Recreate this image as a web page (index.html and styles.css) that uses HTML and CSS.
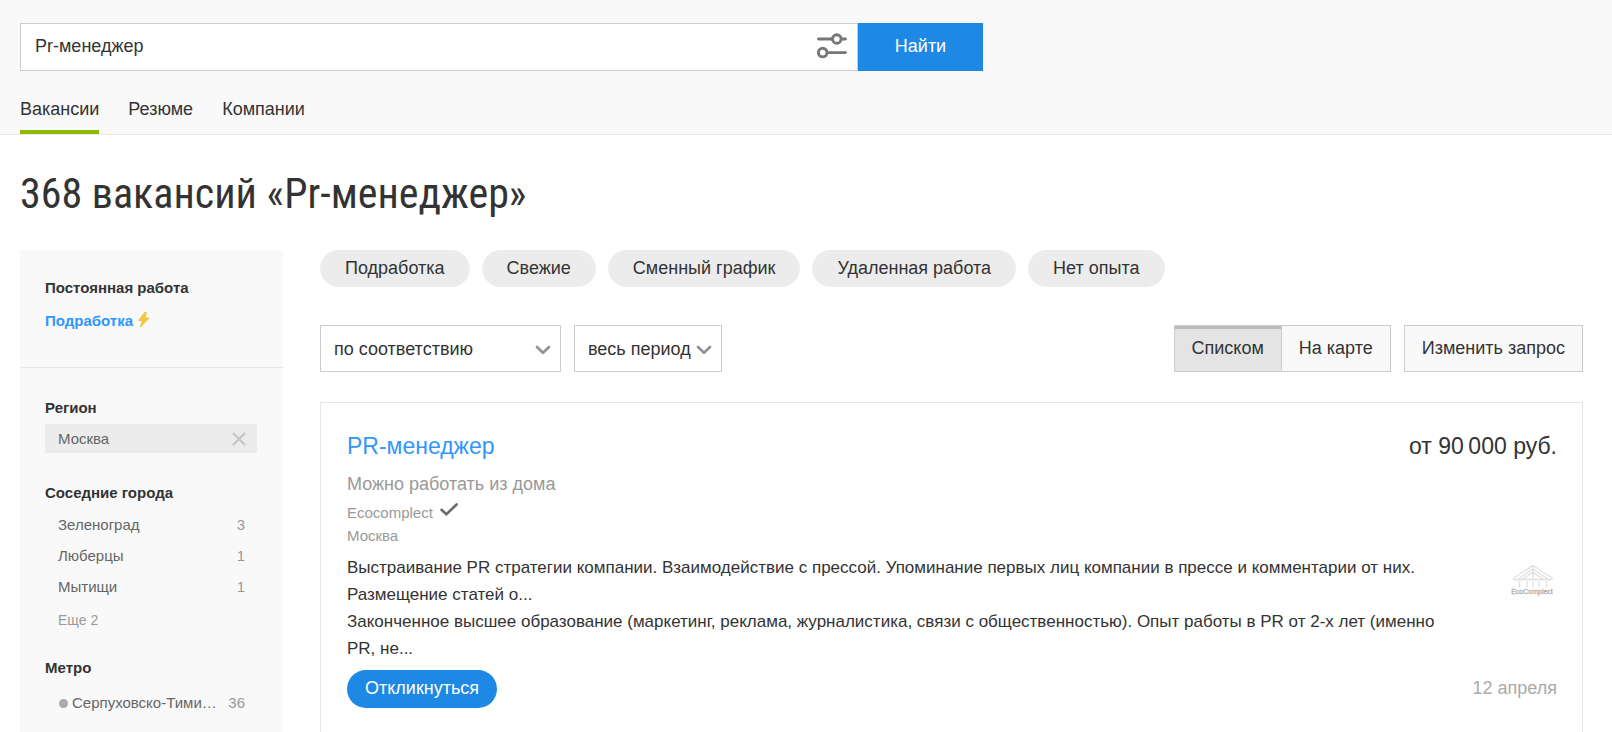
FILE: index.html
```html
<!DOCTYPE html>
<html lang="ru">
<head>
<meta charset="utf-8">
<meta name="viewport" content="width=device-width, initial-scale=1">
<title>368 вакансий «Pr-менеджер»</title>
<link rel="stylesheet" href="styles.css">
</head>
<body>
<header class="header">
  <form class="search" role="search">
    <div class="search-box">
      <input class="search-input" type="text" value="Pr-менеджер" aria-label="Поиск">
      <button class="search-filter" type="button" aria-label="Фильтры">
        <svg width="30" height="26" viewBox="0 0 30 26" fill="none" stroke="#777" stroke-width="2.9" stroke-linecap="round">
          <path d="M1.5 6H15M25 6h3.500M10.500 19.600h18"/>
          <circle cx="19.800" cy="6" r="4.300"/>
          <circle cx="5.700" cy="19.600" r="4.300"/>
        </svg>
      </button>
    </div>
    <button class="search-submit" type="submit">Найти</button>
  </form>
  <nav class="tabs">
    <a class="tab tab-active" href="#">Вакансии</a>
    <a class="tab" href="#">Резюме</a>
    <a class="tab" href="#">Компании</a>
  </nav>
</header>
<main class="page">
  <h1 class="title">368 вакансий «Pr-менеджер»</h1>
  <div class="columns">
    <aside class="sidebar">
      <section class="worktype">
        <strong class="worktype-current">Постоянная работа</strong>
        <a class="worktype-link" href="#">Подработка
          <svg width="12" height="17" viewBox="0 0 12 17"><path fill="#f3c744" stroke="#f3c744" stroke-width="1.4" stroke-linejoin="round" d="M7 1.800L.9 9.400h3.600L2.600 15.600l8-8.500H6.800L8.100 1.800z"/></svg>
        </a>
      </section>
      <section class="filters">
        <h2 class="filter-title">Регион</h2>
        <div class="chosen">
          <span>Москва</span>
          <button class="chosen-clear" type="button" aria-label="Убрать">
            <svg width="14" height="14" viewBox="0 0 14 14" fill="none" stroke="#c4c4c4" stroke-width="2" stroke-linecap="round"><path d="M1.500 1.500l11 11M12.500 1.500l-11 11"/></svg>
          </button>
        </div>
        <h2 class="filter-title filter-next">Соседние города</h2>
        <ul class="options">
          <li><a class="option" href="#"><span class="option-name">Зеленоград</span><span class="count">3</span></a></li>
          <li><a class="option" href="#"><span class="option-name">Люберцы</span><span class="count">1</span></a></li>
          <li><a class="option" href="#"><span class="option-name">Мытищи</span><span class="count">1</span></a></li>
        </ul>
        <a class="more" href="#">Еще 2</a>
        <h2 class="filter-title filter-next">Метро</h2>
        <ul class="options options-metro">
          <li><a class="option" href="#"><i class="dot"></i><span class="option-name">Серпуховско-Тими…</span><span class="count">36</span></a></li>
        </ul>
      </section>
    </aside>
    <div class="results">
      <div class="chips">
        <a class="chip" href="#">Подработка</a>
        <a class="chip" href="#">Свежие</a>
        <a class="chip" href="#">Сменный график</a>
        <a class="chip" href="#">Удаленная работа</a>
        <a class="chip" href="#">Нет опыта</a>
      </div>
      <div class="toolbar">
        <div class="picker picker-wide">
          <select class="select" aria-label="Сортировка"><option>по соответствию</option></select>
          <svg class="chevron" width="16" height="10" viewBox="0 0 16 10" fill="none" stroke="#8f959b" stroke-width="2.8" stroke-linecap="round" stroke-linejoin="round"><path d="M2 2l6 5.8L14 2"/></svg>
        </div>
        <div class="picker">
          <select class="select" aria-label="Период"><option>весь период</option></select>
          <svg class="chevron" width="16" height="10" viewBox="0 0 16 10" fill="none" stroke="#8f959b" stroke-width="2.8" stroke-linecap="round" stroke-linejoin="round"><path d="M2 2l6 5.8L14 2"/></svg>
        </div>
        <div class="views">
          <button class="button button-pressed" type="button" aria-pressed="true">Списком</button>
          <button class="button button-joined" type="button" aria-pressed="false">На карте</button>
        </div>
        <button class="button" type="button">Изменить запрос</button>
      </div>
      <article class="card">
        <div class="card-head">
          <h2 class="card-title"><a href="#">PR-менеджер</a></h2>
          <span class="salary">от 90&#8239;000 руб.</span>
        </div>
        <div class="remote">Можно работать из дома</div>
        <div class="company">
          <a href="#">Ecocomplect</a>
          <svg class="check" width="18" height="13" viewBox="0 0 18 13" fill="none" stroke="#6b6b6b" stroke-width="2.6" stroke-linecap="round"><path d="M1.500 6.800l4.900 4.400L16.600 1.500"/></svg>
        </div>
        <div class="place">Москва</div>
        <div class="card-body">
          <div class="description">
            <p>Выстраивание PR стратегии компании. Взаимодействие с прессой. Упоминание первых лиц компании в прессе и комментарии от них. Размещение статей о...</p>
            <p>Законченное высшее образование (маркетинг, реклама, журналистика, связи с общественностью). Опыт работы в PR от 2-х лет (именно PR, не...</p>
          </div>
          <svg class="logo" width="48" height="34" viewBox="0 0 48 34" fill="none" stroke="#e0e0e0" stroke-width="1.3">
            <path d="M4 15.500L24 2.500l20 13M7 17.500L24 6l17 11.500M4.500 16.500h39M24 3v14M12.500 17L24 9l11.500 8"/>
            <path d="M10.500 18v6M18 18v6M24 18v6M30 18v6M37.500 18v6"/>
            <text class="logo-text" x="23" y="31" text-anchor="middle">EcoComplect</text>
          </svg>
        </div>
        <div class="card-foot">
          <button class="respond" type="button">Откликнуться</button>
          <time class="date">12 апреля</time>
        </div>
      </article>
    </div>
  </div>
</main>
</body>
</html>
```
FILE: styles.css
```css
* {
  box-sizing: border-box;
}

body {
  display: flex;
  flex-direction: column;
  min-height: 100vh;
  margin: 0;
  background: #fff;
  color: #333;
  font: 18px/27px "Liberation Sans", Arial, sans-serif;
}

a {
  color: inherit;
  text-decoration: none;
}

button,
input,
select {
  margin: 0;
  border-radius: 0;
  color: inherit;
  font: inherit;
}

h1,
h2,
p,
ul {
  margin: 0;
  padding: 0;
}

ul {
  list-style: none;
}

svg {
  flex: none;
}

.header {
  padding: 23px 29px 0 20px;
  border-bottom: 1px solid #e9e9e9;
  background: #f9f9f9;
}

.search {
  display: flex;
  max-width: 963px;
}

.search-box {
  display: flex;
  flex: 1;
  min-width: 0;
  height: 48px;
  border: 1px solid #ccc;
  background: #fff;
}

.search-input {
  flex: 1;
  min-width: 0;
  padding: 0 14px 2px;
  border: 0;
  outline: 0;
  background: none;
}

.search-filter {
  display: flex;
  align-items: center;
  padding: 0 10px 2px;
  border: 0;
  background: none;
}

.search-submit {
  width: 125px;
  padding: 0 0 2px;
  border: 0;
  background: #1e88e5;
  color: #fff;
}

.tabs {
  display: flex;
  gap: 29px;
  margin-top: 25px;
}

.tab {
  padding-bottom: 7px;
  border-bottom: 4px solid transparent;
}

.tab-active {
  border-color: #8fb800;
}

.page {
  display: flex;
  flex: 1;
  flex-direction: column;
  padding: 33px 29px 0 20px;
}

.title {
  margin-bottom: 30px;
  font: 400 42px/52px "Roboto Condensed", Roboto, sans-serif;
}

.columns {
  display: flex;
  flex: 1;
  gap: 37px;
}

.sidebar {
  flex: none;
  width: 263px;
  background: #f9f9f9;
  font-size: 15px;
  line-height: 20px;
}

.worktype {
  display: flex;
  flex-direction: column;
  gap: 13px;
  padding: 28px 25px 36px;
  border-bottom: 1px solid #e6e6e6;
}

.worktype-link {
  display: flex;
  gap: 5px;
  color: #2f96ff;
  font-weight: bold;
}

.filters {
  padding: 30px 26px 0 25px;
}

.filter-title {
  font-size: 15px;
  line-height: 20px;
}

.filter-next {
  margin-top: 30px;
}

.chosen {
  display: flex;
  align-items: center;
  justify-content: space-between;
  height: 29px;
  margin-top: 6px;
  padding: 0 11px 0 13px;
  background: #ececec;
  color: #666;
}

.chosen-clear {
  display: flex;
  padding: 0;
  border: 0;
  background: none;
}

.options {
  display: flex;
  flex-direction: column;
  gap: 11px;
  margin-top: 12px;
  padding: 0 12px 0 13px;
}

.options-metro {
  margin-top: 15px;
}

.option {
  display: flex;
  align-items: center;
  color: #666;
}

.option-name {
  flex: 1;
  white-space: nowrap;
}

.count {
  color: #999;
}

.dot {
  flex: none;
  width: 9px;
  height: 9px;
  margin: 0 4px 0 1px;
  border-radius: 50%;
  background: #aaa;
}

.more {
  display: block;
  margin: 16px 0 0 13px;
  color: #999;
  font-size: 14px;
  line-height: 15px;
}

.results {
  display: flex;
  flex: 1;
  flex-direction: column;
  min-width: 0;
}

.chips {
  display: flex;
  flex-wrap: wrap;
  gap: 12px;
  margin-bottom: 38px;
}

.chip {
  padding: 5px 25px;
  border-radius: 19px;
  background: #ececec;
}

.toolbar {
  display: flex;
  gap: 13px;
  margin-bottom: 30px;
}

.picker {
  display: grid;
  width: 148px;
  height: 47px;
}

.picker-wide {
  width: 241px;
}

.select {
  grid-area: 1 / 1;
  width: 100%;
  padding: 1px 13px 0;
  border: 1px solid #ccc;
  background: #fff;
  appearance: none;
}

.chevron {
  grid-area: 1 / 1;
  align-self: center;
  justify-self: end;
  margin: 2px 10px 0 0;
  pointer-events: none;
}

.views {
  display: flex;
  margin-left: auto;
}

.button {
  height: 47px;
  padding: 0 17px;
  border: 1px solid #ccc;
  background: #f9f9f9;
}

.button-pressed {
  background: #e4e4e4;
  box-shadow: inset 0 3px #bbb;
}

.button-joined {
  border-left: 0;
}

.card {
  flex: 1;
  padding: 27px 25px 24px 26px;
  border: 1px solid #e6e6e6;
  border-bottom: 0;
}

.card-head {
  display: flex;
  justify-content: space-between;
  font-size: 23px;
  line-height: 32px;
}

.card-title {
  color: #3296fb;
  font-size: 23px;
  font-weight: normal;
}

.remote {
  margin: 9px 0 3px;
  color: #999;
}

.company,
.place {
  color: #999;
  font-size: 15px;
  line-height: 23px;
}

.company {
  display: flex;
  gap: 7px;
}

.check {
  margin-top: 2px;
}

.card-body {
  display: flex;
  gap: 48px;
  margin: 7px 0 8px;
}

.description {
  flex: 1;
  font-size: 17px;
}

.logo {
  margin-top: 9px;
}

.logo-text {
  fill: #b0b0b0;
  stroke: #b0b0b0;
  stroke-width: 0.3px;
  font-size: 7px;
}

.card-foot {
  display: flex;
  justify-content: space-between;
}

.respond {
  height: 38px;
  padding: 0 18px 2px;
  border: 0;
  border-radius: 19px;
  background: #1e88e5;
  color: #fff;
}

.date {
  padding-top: 5px;
  color: #aaa;
}
```
